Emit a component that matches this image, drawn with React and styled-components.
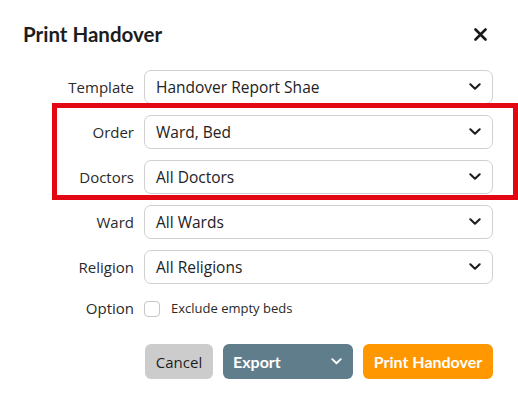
import React from 'react';
import styled, { createGlobalStyle } from 'styled-components';

const GlobalStyle = createGlobalStyle`
  html, body {
    margin: 0;
    padding: 0;
    background: #fff;
  }
  body {
    font-family: "Open Sans", "Noto Sans", sans-serif;
    color: #222;
  }
`;

const fields = [
  { label: 'Template', value: 'Handover Report Shae' },
  { label: 'Order', value: 'Ward, Bed' },
  { label: 'Doctors', value: 'All Doctors' },
  { label: 'Ward', value: 'All Wards' },
  { label: 'Religion', value: 'All Religions' },
];

const Chevron = ({ color = '#1e1e1e', size = 12 }) => (
  <svg width={size} height={size * 0.62} viewBox="0 0 12 7.5" fill="none">
    <path d="M1.3 1.3 L6 5.8 L10.7 1.3" stroke={color} strokeWidth="2.1" strokeLinecap="round" strokeLinejoin="round" />
  </svg>
);

const CloseIcon = () => (
  <svg width="13" height="13" viewBox="0 0 13 13" fill="none">
    <path d="M1.5 1.5 L11.5 11.5 M11.5 1.5 L1.5 11.5" stroke="#1a1a1a" strokeWidth="2.6" strokeLinecap="round" />
  </svg>
);

const App = () => {
  return (
    <>
      <GlobalStyle />
      <Dialog>
        <Header>
          <Title>Print Handover</Title>
          <CloseButton aria-label="Close">
            <CloseIcon />
          </CloseButton>
        </Header>
        <Form>
          {fields.map((f) => (
            <React.Fragment key={f.label}>
              <Label>{f.label}</Label>
              <Select>
                <span>{f.value}</span>
                <Chevron />
              </Select>
            </React.Fragment>
          ))}
          <Label>Option</Label>
          <CheckRow>
            <Checkbox />
            <CheckText>Exclude empty beds</CheckText>
          </CheckRow>
        </Form>
        <Actions>
          <Button variant="cancel">Cancel</Button>
          <Button variant="export" wide>
            <span>Export</span>
            <Chevron color="#fff" size={11} />
          </Button>
          <Button variant="print" wide>Print Handover</Button>
        </Actions>
        <Highlight />
      </Dialog>
    </>
  );
};

const Dialog = styled.div`
  position: relative;
  width: 518px;
  height: 401px;
  box-sizing: border-box;
  padding: 22px 25px 0 23px;
  overflow: hidden;
`;

const Header = styled.div`
  display: flex;
  align-items: center;
  justify-content: space-between;
  height: 24px;
  padding-right: 6px;
`;

const Title = styled.h2`
  margin: 0;
  font-family: Lato, "Open Sans", sans-serif;
  font-size: 20.5px;
  line-height: 24px;
  font-weight: 700;
  color: #1d1d1d;
`;

const CloseButton = styled.button`
  border: 0;
  background: none;
  padding: 0;
  display: flex;
  cursor: pointer;
`;

const Form = styled.div`
  margin-top: 24px;
  display: grid;
  grid-template-columns: 111px 1fr;
  column-gap: 10px;
  row-gap: 11px;
  align-items: center;
`;

const Label = styled.label`
  text-align: right;
  font-size: 15px;
  color: #2a2a2a;
`;

const Select = styled.div`
  height: 34px;
  box-sizing: border-box;
  border: 1px solid #d0d0d0;
  border-radius: 7px;
  display: flex;
  align-items: center;
  justify-content: space-between;
  padding: 0 11px 0 11px;
  font-size: 15.5px;
  color: #222;
`;

const CheckRow = styled.div`
  display: flex;
  align-items: center;
  height: 26px;
`;

const Checkbox = styled.span`
  width: 16px;
  height: 16px;
  box-sizing: border-box;
  border: 1px solid #c6c6c6;
  border-radius: 4px;
  margin-top: 1px;
`;

const CheckText = styled.span`
  margin-left: 11px;
  font-size: 13px;
  color: #2a2a2a;
`;

const Actions = styled.div`
  margin-top: 23px;
  display: flex;
  justify-content: flex-end;
  gap: 10px;
`;

const buttonColors = {
  cancel: { bg: '#cccccc', fg: '#1e1e1e', weight: 400, font: '"Open Sans", sans-serif', size: '15px' },
  export: { bg: '#607d8b', fg: '#ffffff', weight: 700, font: 'Lato, "Open Sans", sans-serif', size: '16px' },
  print: { bg: '#ff9800', fg: '#ffffff', weight: 700, font: 'Lato, "Open Sans", sans-serif', size: '16px' },
};

const Button = styled.button`
  height: 35px;
  box-sizing: border-box;
  border: 0;
  border-radius: 6px;
  white-space: nowrap;
  font-family: ${(p) => buttonColors[p.variant].font};
  font-size: ${(p) => buttonColors[p.variant].size};
  font-weight: ${(p) => buttonColors[p.variant].weight};
  background: ${(p) => buttonColors[p.variant].bg};
  color: ${(p) => buttonColors[p.variant].fg};
  width: ${(p) => (p.wide ? '130px' : '68px')};
  padding: ${(p) => (p.variant === 'export' ? '0 11px 0 10px' : '0')};
  display: flex;
  align-items: center;
  justify-content: ${(p) => (p.variant === 'export' ? 'space-between' : 'center')};
  cursor: pointer;
`;

const Highlight = styled.div`
  position: absolute;
  left: 52px;
  top: 103px;
  width: 466px;
  height: 97px;
  box-sizing: border-box;
  border: 5px solid #e30613;
  pointer-events: none;
`;

export default App;
